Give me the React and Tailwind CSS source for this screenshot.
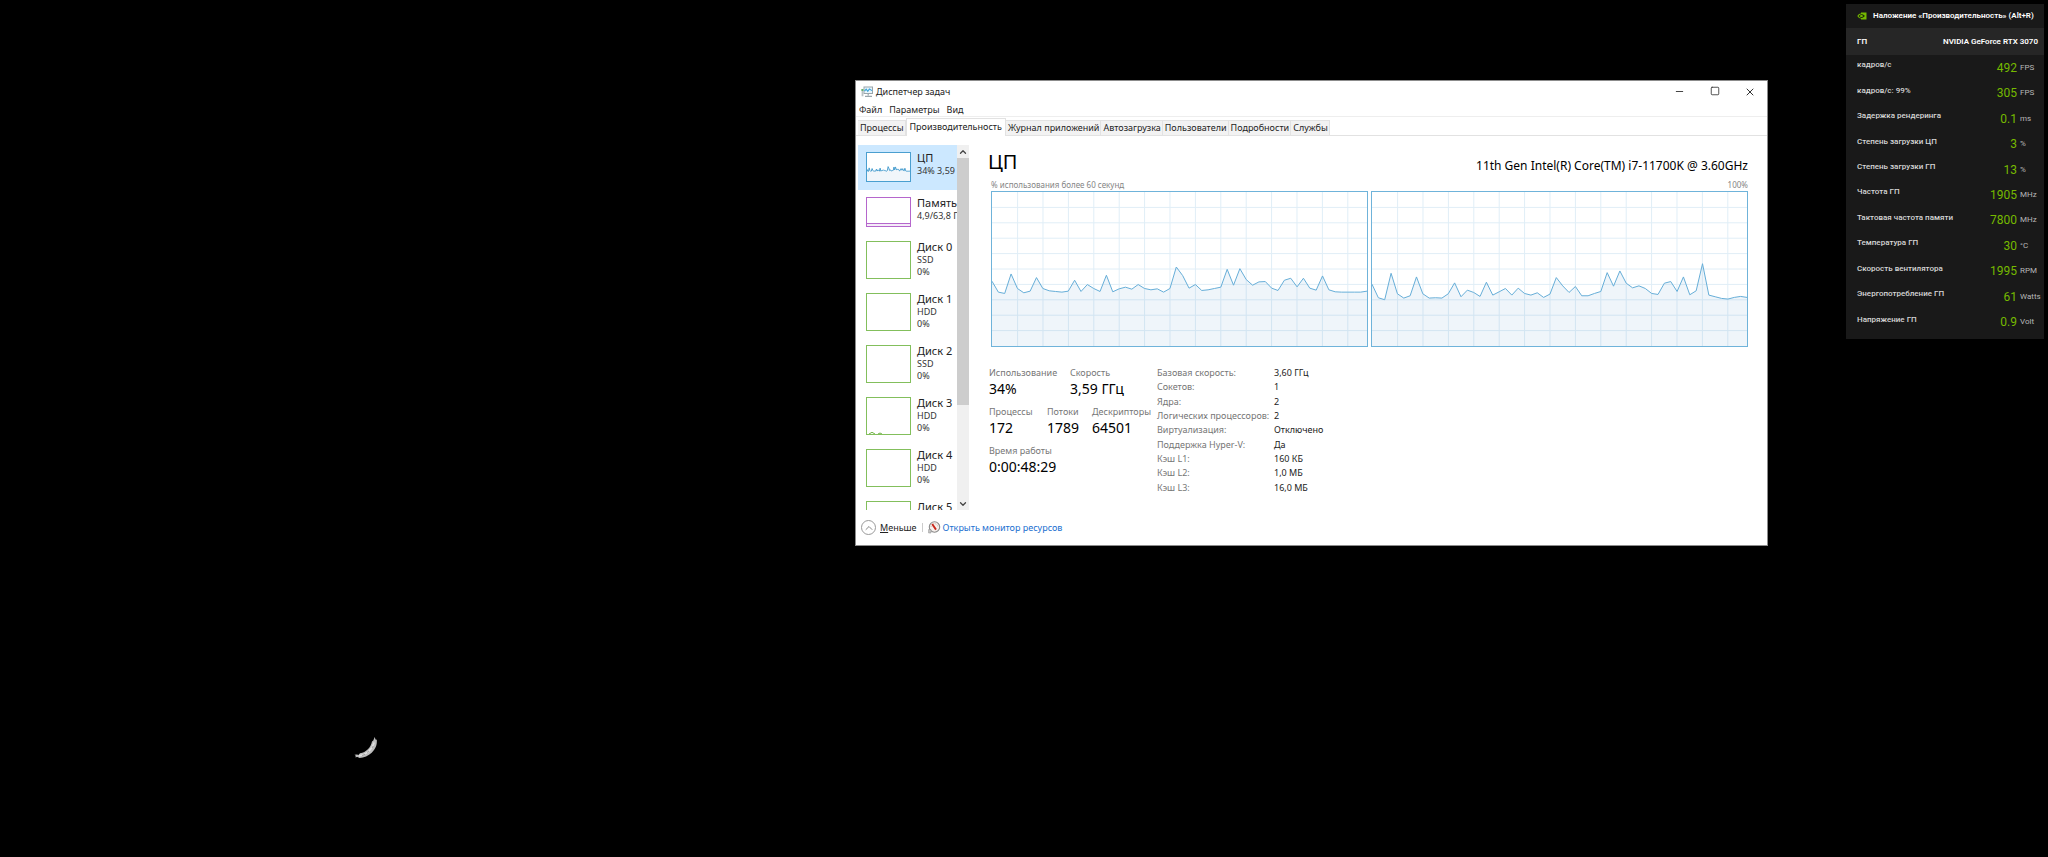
import { ChevronDown, ChevronUp, Minus, Square, X } from "lucide-react";

const TABS = [
  "Процессы",
  "Производительность",
  "Журнал приложений",
  "Автозагрузка",
  "Пользователи",
  "Подробности",
  "Службы",
];

const DISKS = [
  { name: "Диск 0", type: "SSD" },
  { name: "Диск 1", type: "HDD" },
  { name: "Диск 2", type: "SSD" },
  { name: "Диск 3", type: "HDD", active: true },
  { name: "Диск 4", type: "HDD" },
  { name: "Диск 5" },
];

const DETAILS = [
  ["Базовая скорость:", "3,60 ГГц"],
  ["Сокетов:", "1"],
  ["Ядра:", "2"],
  ["Логических процессоров:", "2"],
  ["Виртуализация:", "Отключено"],
  ["Поддержка Hyper-V:", "Да"],
  ["Кэш L1:", "160 КБ"],
  ["Кэш L2:", "1,0 МБ"],
  ["Кэш L3:", "16,0 МБ"],
];

const GPU_METRICS = [
  ["кадров/с", "492", "FPS"],
  ["кадров/с: 99%", "305", "FPS"],
  ["Задержка рендеринга", "0.1", "ms"],
  ["Степень загрузки ЦП", "3", "%"],
  ["Степень загрузки ГП", "13", "%"],
  ["Частота ГП", "1905", "MHz"],
  ["Тактовая частота памяти", "7800", "MHz"],
  ["Температура ГП", "30", "°C"],
  ["Скорость вентилятора", "1995", "RPM"],
  ["Энергопотребление ГП", "61", "Watts"],
  ["Напряжение ГП", "0.9", "Volt"],
];

// Distance from the top of the graph, 60 samples on a 466-unit scale
const CORE_0 = [
  270, 303, 307, 248, 292, 305, 300, 259, 292, 299, 301, 303, 300, 267, 301, 280, 292, 301, 252, 302,
  293, 288, 294, 280, 292, 296, 293, 303, 292, 227, 253, 291, 280, 298, 296, 292, 288, 234, 282, 232,
  265, 282, 272, 271, 291, 298, 267, 261, 287, 261, 291, 297, 254, 296, 302, 303, 303, 303, 303, 300,
];
const CORE_1 = [
  279, 320, 326, 246, 308, 321, 314, 257, 308, 321, 320, 321, 308, 275, 317, 297, 304, 316, 273, 312,
  302, 292, 312, 291, 307, 312, 305, 319, 309, 259, 284, 304, 286, 314, 314, 307, 301, 244, 285, 239,
  276, 290, 284, 292, 307, 310, 276, 271, 301, 257, 311, 299, 217, 312, 317, 322, 324, 319, 316, 319,
];

const GRAPH_W = 1128;
const GRAPH_H = 466;

function toPoints(samples) {
  const step = GRAPH_W / (samples.length - 1);
  return samples.map((y, i) => `${(i * step).toFixed(1)},${y}`).join(" ");
}

function CoreGraph({ samples }) {
  const points = toPoints(samples);
  return (
    <div className="h-[156px] flex-1 border border-[#6fb3da] bg-white">
      <svg className="block h-full w-full" viewBox={`0 0 ${GRAPH_W} ${GRAPH_H}`} preserveAspectRatio="none">
        {Array.from({ length: 14 }, (_, i) => (
          <line key={`v${i}`} x1={77 + i * 76.4} x2={77 + i * 76.4} y1="0" y2={GRAPH_H} stroke="#e0eef7" vectorEffect="non-scaling-stroke" />
        ))}
        {Array.from({ length: 9 }, (_, i) => (
          <line key={`h${i}`} x1="0" x2={GRAPH_W} y1={(i + 1) * 46.6} y2={(i + 1) * 46.6} stroke="#e0eef7" vectorEffect="non-scaling-stroke" />
        ))}
        <polygon points={`0,${GRAPH_H} ${points} ${GRAPH_W},${GRAPH_H}`} fill="#1e78b4" fillOpacity="0.07" />
        <polyline points={points} fill="none" stroke="#66aed8" vectorEffect="non-scaling-stroke" />
      </svg>
    </div>
  );
}

function SideItem({ title, lines, selected, tall, color, children }) {
  return (
    <button
      type="button"
      className={`flex w-full shrink-0 gap-[6px] pl-2 text-left ${selected ? "bg-[#cce8ff]" : ""} ${tall ? "h-[52px] pt-[6px]" : "h-[45px] pt-[7px]"}`}
    >
      <span className={`block w-[45px] shrink-0 border bg-white ${color} ${tall ? "h-[38px]" : "h-[30px]"}`}>{children}</span>
      <span className="-mt-px block whitespace-nowrap">
        <span className="block text-[11px] leading-[14px] text-[#222]">{title}</span>
        {lines.map((line) => (
          <span key={line} className="block text-[9px] leading-[12px] text-[#333]">
            {line}
          </span>
        ))}
      </span>
    </button>
  );
}

function Stat({ label, value }) {
  return (
    <div>
      <div className="text-[9px] leading-[14px] text-[#767676]">{label}</div>
      <div className="text-[14px] leading-[18px] text-black">{value}</div>
    </div>
  );
}

function AppIcon() {
  return (
    <svg className="h-[12px] w-[12px]" viewBox="0 0 12 12">
      <rect x="3" y="1" width="8.500" height="6.500" fill="#e9f6fc" stroke="#9aa5ab" />
      <path d="M3.500 5.200 5.200 3.200l1.600 2.200L8.400 3 11 4.600" fill="none" stroke="#3aa3dc" strokeWidth="1.1" />
      <path d="M0.600 3h1.800v7.300H0.600z" fill="#b9c0c3" />
      <path d="M0.400 3.200h2v1.600h-2z" fill="#4fae55" />
      <path d="M7.200 7.600v2M4 10.400h7" stroke="#9aa5ab" strokeWidth="1.2" />
    </svg>
  );
}

function MonitorIcon() {
  return (
    <svg className="h-[13px] w-[13px]" viewBox="0 0 13 13">
      <circle cx="6.500" cy="6" r="5.200" fill="#f6f1ee" stroke="#8a8a8a" strokeWidth="1.1" />
      <path d="M3.100 6a3.400 3.400 0 0 1 6.800 0" fill="none" stroke="#c9a79a" strokeWidth="0.8" strokeDasharray="1 1" />
      <path d="M4.200 3 8 8.600" stroke="#c8281c" strokeWidth="1.900" />
      <path d="M0.600 8.500h2.400v3.500H0.600z" fill="#c9c9c9" stroke="#888" strokeWidth="0.5" />
    </svg>
  );
}

function NvidiaIcon() {
  return (
    <svg className="h-[8px] w-[10px]" viewBox="0 0 20 16">
      <path d="M8 1h11v14H8z" fill="#76b900" />
      <path d="M8 3C4.600 3.200 2 5.400.8 8 2 11 5 13 8 13.200" fill="#76b900" />
      <path d="M3.200 8C5 4.800 8.500 3.800 11 4.600c2.500.8 4 2.600 4.500 3.400-1.200 2-3.500 3.900-6.500 3.800C6 11.700 4.200 10 3.200 8z" fill="#1d2b0a" />
      <path d="M5.500 8C6.600 6 9 5.500 10.500 6.300c1.200.6 1.700 1.200 2 1.700-.8 1.300-2 2.200-3.600 2.200C7.200 10.200 6.200 9.200 5.500 8z" fill="#76b900" />
    </svg>
  );
}

function Feather() {
  return (
    <svg className="absolute top-[735px] left-[353px] h-[24px] w-[26px]" viewBox="0 0 26 24">
      <path
        d="M21.700 2 22.500 4.600 23.800 4.800C24.200 10 22.600 14 18.700 17.700 15.400 20.800 11 22.600 6.500 22.900L4.600 21.900 2 22.300 3 21 1.500 19.800 4 19.600 5.400 20.100 7 18.200C10.500 17.800 12.500 16.600 14.600 14.600 17.200 12.200 18.300 9.500 19 6.500L20.300 5.400z"
        fill="#bdbdbd"
      />
      <path d="M6 20.900C11 20.300 18 16.800 21.200 7.500" fill="none" stroke="#e2e2e2" strokeWidth="1.600" />
      <path d="M9 20.500l3-1.200M14 17.600l2-1.600M19 13l1.200-2" stroke="#858585" strokeWidth="0.700" />
    </svg>
  );
}

function TaskManager() {
  return (
    <section className="absolute top-[80px] right-[280px] left-[855px] flex flex-col border border-[#8c8c8c] bg-white text-[9px] text-[#222]">
      {/* Title bar */}
      <header className="flex h-[22px] items-center pl-[5px]">
        <AppIcon />
        <h1 className="ml-[3px] flex-1">Диспетчер задач</h1>
        <div className="flex text-[#333]">
          <button type="button" aria-label="Свернуть" className="flex w-[35px] justify-center">
            <Minus size={11} strokeWidth={2} />
          </button>
          <button type="button" aria-label="Развернуть" className="flex w-[35px] justify-center">
            <Square size={10} strokeWidth={2} />
          </button>
          <button type="button" aria-label="Закрыть" className="flex w-[35px] justify-center">
            <X size={12} strokeWidth={2} />
          </button>
        </div>
      </header>

      <nav className="flex h-[14px] items-center gap-[7px] border-b border-[#eee] pl-[3px]">
        <button type="button">Файл</button>
        <button type="button">Параметры</button>
        <button type="button">Вид</button>
      </nav>

      {/* Tabs */}
      <div role="tablist" className="flex h-[19px] items-end border-b border-[#e2e2e2] pl-[2px]">
        {TABS.map((tab, i) => (
          <button
            key={tab}
            type="button"
            role="tab"
            aria-selected={i === 1}
            className={
              i === 1
                ? "-mb-px h-[18px] border border-b-0 border-[#e2e2e2] bg-white px-[3px] pb-[2px]"
                : "h-[15px] border border-b-0 border-l-0 border-[#e2e2e2] bg-[#f2f2f2] pr-px pl-[2px]"
            }
          >
            {tab}
          </button>
        ))}
      </div>

      <div className="flex pt-[9px] pl-[2px]">
        {/* Device list */}
        <div className="flex h-[365px] w-[111px] shrink-0">
          <div className="flex min-w-0 flex-1 flex-col overflow-hidden">
            <SideItem title="ЦП" lines={["34% 3,59"]} selected color="border-[#4a9fd0]">
              <svg className="block h-full w-full" viewBox={`0 0 ${GRAPH_W} ${GRAPH_H}`} preserveAspectRatio="none">
                <polygon points={`0,${GRAPH_H} ${toPoints(CORE_0)} ${GRAPH_W},${GRAPH_H}`} fill="#f1f6fa" />
                <polyline points={toPoints(CORE_0)} fill="none" stroke="#4a9fd0" vectorEffect="non-scaling-stroke" />
              </svg>
            </SideItem>
            <SideItem title="Память" lines={["4,9/63,8 Г"]} color="border-[#b566cc]">
              <span className="flex h-full items-end">
                <span className="h-[3px] w-full border-t border-[#b566cc] bg-[#f4ebf8]" />
              </span>
            </SideItem>
            {DISKS.map((disk) => (
              <SideItem key={disk.name} title={disk.name} lines={disk.type ? [disk.type, "0%"] : []} tall color="border-[#83bf5c]">
                {disk.active && (
                  <span className="flex h-full items-end">
                    <svg className="h-[2px] w-full" viewBox="0 0 43 2">
                      <path d="M2 2 5 .3 8 2M11 2l2-1 2 1" fill="none" stroke="#6fb244" />
                    </svg>
                  </span>
                )}
              </SideItem>
            ))}
          </div>
          <div className="flex w-[12px] flex-col items-center justify-between bg-[#f0f0f0] text-[#444]">
            <button type="button" aria-label="Вверх" className="flex h-[13px] items-center">
              <ChevronUp size={10} strokeWidth={3} />
            </button>
            <div className="h-[247px] w-full bg-[#cdcdcd]" />
            <div className="flex-1" />
            <button type="button" aria-label="Вниз" className="flex h-[13px] items-center">
              <ChevronDown size={10} strokeWidth={3} />
            </button>
          </div>
        </div>

        {/* CPU page */}
        <main className="min-w-0 flex-1 pr-[19px] pl-[19px]">
          <div className="flex items-end justify-between text-black">
            <h2 className="text-[20px] leading-[34px]">ЦП</h2>
            <div className="text-[12px] leading-[26px]">11th Gen Intel(R) Core(TM) i7-11700K @ 3.60GHz</div>
          </div>
          <div className="flex h-[12px] justify-between pl-[3px] text-[8px] leading-[11px] text-[#858585]">
            <span>% использования более 60 секунд</span>
            <span>100%</span>
          </div>
          <div className="flex gap-[3px] pl-[3px]">
            <CoreGraph samples={CORE_0} />
            <CoreGraph samples={CORE_1} />
          </div>

          <div className="flex pt-[19px] pb-px pl-px">
            <div className="flex w-[168px] flex-col gap-[7px]">
              <div className="grid grid-cols-[81px_auto] justify-start">
                <Stat label="Использование" value="34%" />
                <Stat label="Скорость" value="3,59 ГГц" />
              </div>
              <div className="grid grid-cols-[58px_45px_auto] justify-start">
                <Stat label="Процессы" value="172" />
                <Stat label="Потоки" value="1789" />
                <Stat label="Дескрипторы" value="64501" />
              </div>
              <Stat label="Время работы" value="0:00:48:29" />
            </div>
            <table className="h-[129px] text-[9px] leading-[14px]">
              <tbody>
                {DETAILS.map(([label, value]) => (
                  <tr key={label}>
                    <th scope="row" className="w-[117px] p-0 text-left font-normal text-[#767676]">
                      {label}
                    </th>
                    <td className="p-0">{value}</td>
                  </tr>
                ))}
              </tbody>
            </table>
          </div>
        </main>
      </div>

      <footer className="flex h-[35px] items-center pl-[5px]">
        <button type="button" className="flex items-center gap-1">
          <span className="flex h-[15px] w-[15px] items-center justify-center rounded-full border border-[#999] text-[#888]">
            <ChevronUp size={12} strokeWidth={2} />
          </span>
          <span>
            <u>М</u>еньше
          </span>
        </button>
        <span className="mx-[5px] h-[9px] w-px bg-[#ccc]" />
        <a href="#resmon" className="flex items-center gap-[2px] text-[#1a6fd0]">
          <MonitorIcon />
          Открыть монитор ресурсов
        </a>
      </footer>
    </section>
  );
}

function GpuOverlay() {
  return (
    <aside className="absolute top-[4px] right-[4px] w-[198px] bg-[#191919] pb-1 font-[Roboto,sans-serif] text-[8px] text-[#d6d6d6]">
      <header className="flex h-[24px] items-center gap-[6px] pl-[11px] font-semibold whitespace-nowrap text-white">
        <NvidiaIcon />
        Наложение «Производительность» (Alt+R)
      </header>
      <div className="flex h-[27px] items-center justify-between bg-[#262626] pr-[6px] pl-[11px] font-semibold text-white">
        <span>ГП</span>
        <span>NVIDIA GeForce RTX 3070</span>
      </div>
      <table className="h-[280px] w-full">
        <tbody>
          {GPU_METRICS.map(([label, value, unit]) => (
            <tr key={label}>
              <th scope="row" className="p-0 pb-[5px] pl-[11px] text-left font-medium whitespace-nowrap">
                {label}
              </th>
              <td className="p-0 text-right text-[12px] leading-[16px] text-[#76b900]">{value}</td>
              <td className="w-[27px] p-0 pl-[3px] text-[#b8b8b8]">{unit}</td>
            </tr>
          ))}
        </tbody>
      </table>
    </aside>
  );
}

export default function App() {
  return (
    <div className="relative min-h-screen overflow-hidden bg-black font-['Noto_Sans','Open_Sans',sans-serif]">
      <Feather />
      <TaskManager />
      <GpuOverlay />
    </div>
  );
}
